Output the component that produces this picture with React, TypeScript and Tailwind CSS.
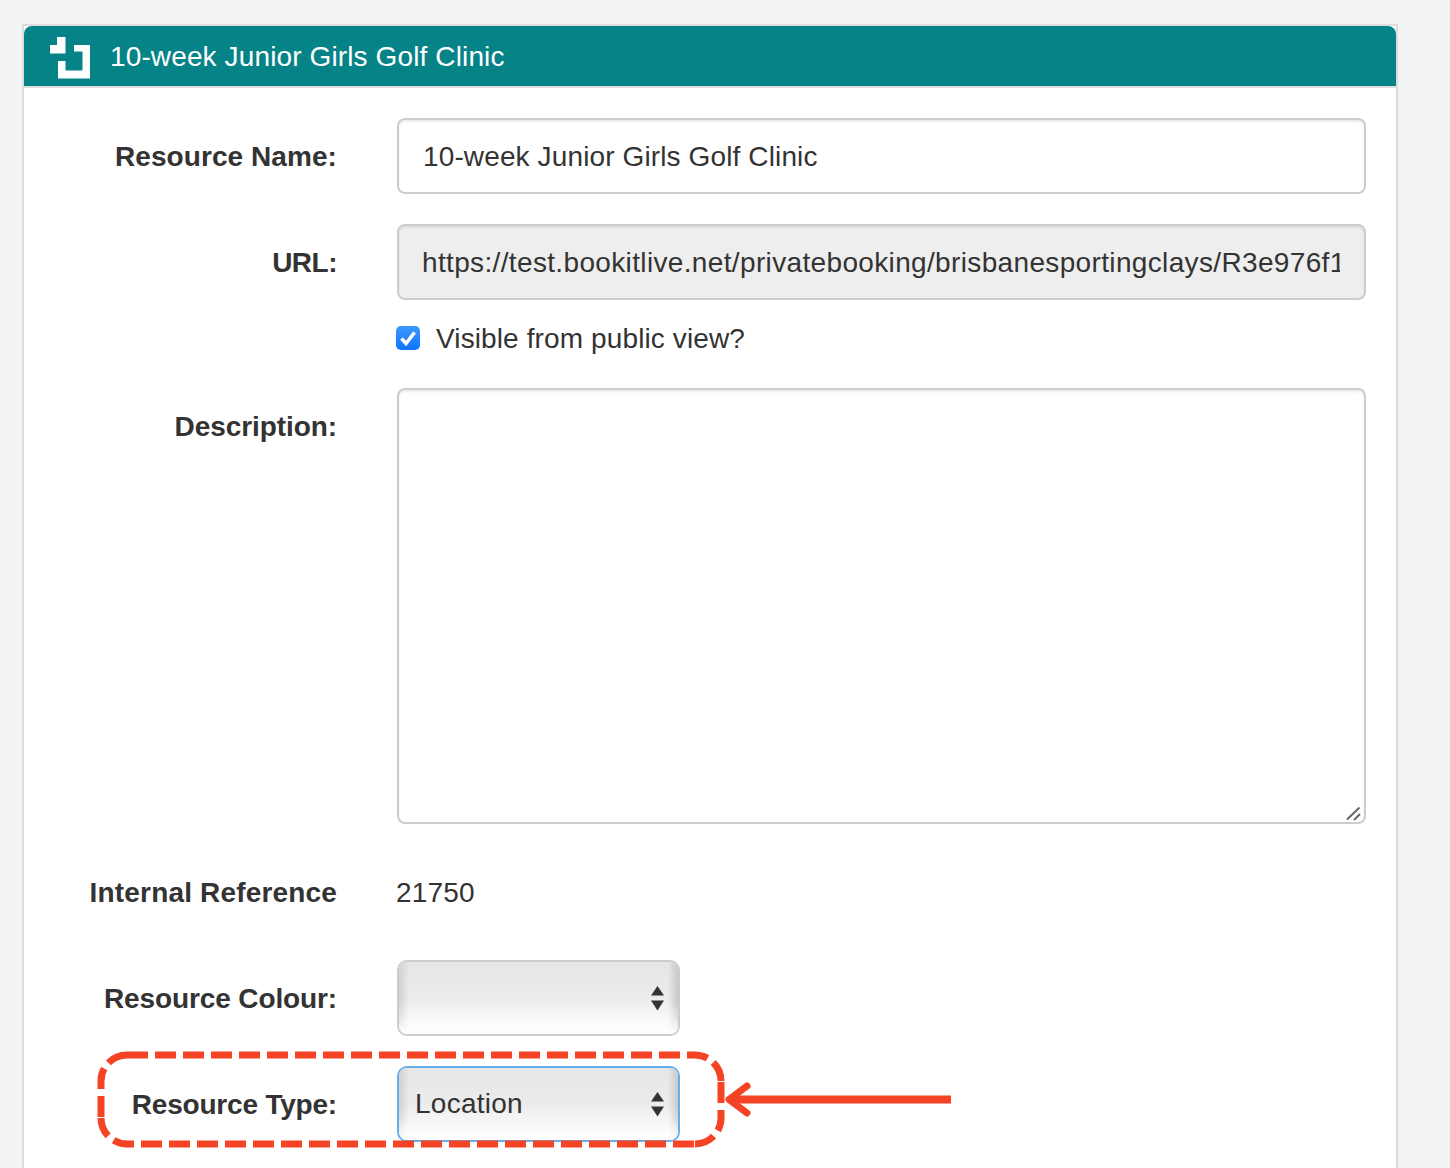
import React from "react";

const labelCls =
  "w-[313px] h-[76px] shrink-0 flex items-center justify-end pt-[2px] text-[28px] font-bold text-[#333]";
const inputCls =
  "w-full h-[76px] rounded-[8px] border-2 border-[#ccc] pr-6 pt-[2px] text-[28px] text-[#333] outline-none shadow-[inset_0_2px_2px_rgba(0,0,0,0.075)]";

function Row({ label, track, children }: { label: string; track: string; children: React.ReactNode }) {
  return (
    <div className="flex items-start gap-[60px] pr-[30px]">
      <div className={`${labelCls} ${track}`}>{label}</div>
      <div className="flex-1 min-w-0">{children}</div>
    </div>
  );
}

function GelSelect({ value, focus }: { value?: string; focus?: boolean }) {
  return (
    <div className={`relative w-[283px] h-[76px] rounded-[10px] border-2 bg-white ${focus ? "border-[#66afe9]" : "border-[#ccc]"}`}>
      <div className="relative h-full rounded-[8px] overflow-hidden">
        <div className="h-full flex items-center pl-4 text-[28px] tracking-[0.25px] text-[#333] bg-gradient-to-b from-[#e6e6e6] from-0% via-[#ececec] via-50% to-[#fdfdfd] to-90%">
          {value}
        </div>
        <div className="absolute inset-y-0 left-0 w-[10px] bg-gradient-to-r from-[#d0d0d0] to-transparent [mask-image:linear-gradient(to_bottom,black_55%,transparent)]" />
        <div className="absolute inset-y-0 right-0 w-[10px] bg-gradient-to-l from-[#c8c8c8] to-transparent [mask-image:linear-gradient(to_bottom,black_55%,transparent)]" />
      </div>
      <svg className="absolute left-[252px] top-[24px]" width="13" height="25" viewBox="0 0 13 25">
        <path d="M6.5 0 L13 9.5 L0 9.5 Z M0 14.5 L13 14.5 L6.5 24.5 Z" fill="#333" />
      </svg>
    </div>
  );
}

export default function App() {
  return (
    <div className="relative h-[1168px] overflow-hidden bg-[#f2f3f5] pt-6 pl-[22px] pr-[52px] font-['Liberation_Sans',Arial,sans-serif]">
      <div className="h-[1200px] border-2 border-[#dddddd] bg-white">
        <div className="h-[62px] flex items-center rounded-t-[8px] border-b-2 border-[#dddddd] bg-[#058387] pl-[26px] gap-5">
          <svg width="40" height="42" viewBox="50 37 40 42" className="shrink-0 mt-[3px]">
            <path
              d="M57 37H65.5V53.5H50V45H57Z M74 45H90V78.5H58V61H65.5V70.5H82.5V51.5H74Z"
              fill="#fff"
            />
          </svg>
          <span className="pt-[2px] text-[28px] tracking-[0.125px] text-white">10-week Junior Girls Golf Clinic</span>
        </div>

        <div className="pt-[30px] flex flex-col">
          <Row label="Resource Name:" track="tracking-[0.07px]">
            <input readOnly value="10-week Junior Girls Golf Clinic" className={`${inputCls} pl-6 bg-white tracking-[0.125px]`} />
          </Row>
          <div className="mt-[30px]">
            <Row label="URL:" track="tracking-[-0.5px]">
              <input
                readOnly
                value="https://test.bookitlive.net/privatebooking/brisbanesportingclays/R3e976f1c"
                className={`${inputCls} pl-[23px] bg-[#eeeeee] tracking-[0.35px]`}
              />
            </Row>
          </div>
          <div className="h-[76px] mb-3 flex items-center pl-[372px] gap-4">
            <div className="relative w-6 h-6">
              <div className="w-6 h-6 rounded-[5px] bg-gradient-to-b from-[#3b99fc] to-[#0a74ff]" />
              <svg className="absolute inset-0" width="24" height="24" viewBox="0 0 24 24" fill="none">
                <path d="M5.5 12.5 L10 17.5 L18.5 6.5" stroke="#fff" strokeWidth="3.6" />
              </svg>
            </div>
            <span className="pt-[2px] text-[28px] tracking-[0.12px] text-[#333]">Visible from public view?</span>
          </div>
          <Row label="Description:" track="tracking-[-0.08px]">
            <div className="relative h-[436px]">
              <textarea readOnly className="block w-full h-full resize-none rounded-[8px] border-2 border-[#ccc] bg-white outline-none shadow-[inset_0_2px_2px_rgba(0,0,0,0.075)]" />
              <svg className="absolute right-[4px] bottom-[2px]" width="16" height="16" viewBox="0 0 16 16" fill="none">
                <path d="M1 13.5 L13.5 1.5 M8 14 L14 8" stroke="#666" strokeWidth="2" />
              </svg>
            </div>
          </Row>
          <div className="mt-[30px]">
            <Row label="Internal Reference" track="tracking-[0.17px]">
              <div className="h-[76px] flex items-center pt-[2px] text-[28px] tracking-[0.2px] text-[#333] -ml-px">21750</div>
            </Row>
          </div>
          <div className="mt-[30px]">
            <Row label="Resource Colour:" track="tracking-[-0.12px]">
              <GelSelect />
            </Row>
          </div>
          <div className="mt-[30px]">
            <Row label="Resource Type:" track="tracking-[-0.2px]">
              <GelSelect value="Location" focus />
            </Row>
          </div>
        </div>
      </div>

      {/* annotation drawn over the form */}
      <svg className="absolute inset-0 pointer-events-none" width="1450" height="1168" viewBox="0 0 1450 1168" fill="none">
        <g stroke="#f44325" strokeWidth="7" strokeDasharray="21 7">
          <path d="M127 1055 H695 A26 26 0 0 1 721 1081" />
          <path d="M721 1082 V1118 A26 26 0 0 1 695 1144" />
          <path d="M694 1144 H127 A26 26 0 0 1 101 1118" />
          <path d="M101 1117 V1081 A26 26 0 0 1 127 1055" />
        </g>
        <path d="M951 1099.5 H732" stroke="#f44325" strokeWidth="8" />
        <path d="M747 1086 L729 1099.5 L747 1113" stroke="#f44325" strokeWidth="7" strokeLinecap="round" strokeLinejoin="round" />
      </svg>
    </div>
  );
}
